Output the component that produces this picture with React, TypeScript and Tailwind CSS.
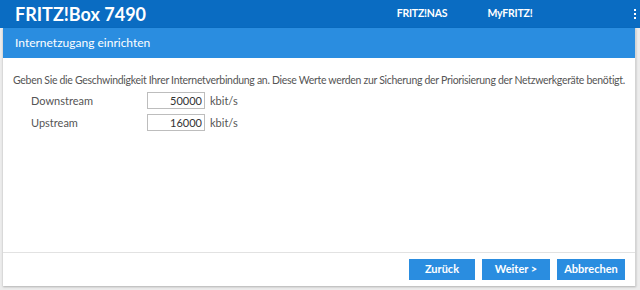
import React from 'react';

export default function App() {
  const [down, setDown] = React.useState('50000');
  const [up, setUp] = React.useState('16000');

  return (
    <main className="w-[640px] h-[290px] bg-[#ececec] flex flex-col overflow-hidden font-['Lato','Open_Sans',sans-serif]">
      {/* Kopfzeile */}
      <header className="h-[28px] shrink-0 bg-[#0a6cc2] flex items-center pl-[15px] pr-[4px]">
        <div className="text-white font-bold text-[18px] leading-none">FRITZ!Box 7490</div>
        <nav className="ml-auto flex items-center text-white text-[10.5px] font-bold tracking-[-0.2px]">
          <span className="mr-[40px]">FRITZ!NAS</span>
          <span className="mr-[101px]">MyFRITZ!</span>
          <span className="flex flex-col gap-[1.5px]">
            <span className="w-[2.5px] h-[2.5px] bg-white" />
            <span className="w-[2.5px] h-[2.5px] bg-white" />
            <span className="w-[2.5px] h-[2.5px] bg-white" />
          </span>
        </nav>
      </header>

      {/* Assistent */}
      <section className="mx-[3px] mr-[4px] h-[258px] bg-white flex flex-col border-r border-[#d4d4d4] shadow-[0_1px_2px_rgba(0,0,0,0.25)]">
        <div className="h-[30px] shrink-0 bg-[#2a8de0] flex items-center pl-[12px] text-white text-[12px]">
          Internetzugang einrichten
        </div>
        <div className="flex-1 pt-[15px] pl-[10px] text-[#555] text-[11px]">
          <p className="mb-[3px] whitespace-nowrap text-[10.5px] tracking-[-0.3px]">
            Geben Sie die Geschwindigkeit Ihrer Internetverbindung an. Diese Werte werden zur Sicherung der Priorisierung der Netzwerkgeräte benötigt.
          </p>
          <div className="grid grid-cols-[116px_auto] gap-y-[5px] items-center pl-[18px] leading-[17px]">
            <label>Downstream</label>
            <div className="flex items-center gap-[5px]">
              <input
                value={down}
                onChange={e => setDown(e.target.value)}
                className="w-[58px] h-[17px] border border-[#bdbdbd] text-right pr-[2px] text-[11px] text-[#333] outline-none"
              />
              <span>kbit/s</span>
            </div>
            <label>Upstream</label>
            <div className="flex items-center gap-[5px]">
              <input
                value={up}
                onChange={e => setUp(e.target.value)}
                className="w-[58px] h-[17px] border border-[#bdbdbd] text-right pr-[2px] text-[11px] text-[#333] outline-none"
              />
              <span>kbit/s</span>
            </div>
          </div>
        </div>
        <div className="h-[34px] shrink-0 border-t border-[#e2e2e2] flex items-center justify-end gap-[7px] pr-[10px]">
          <button className="w-[66px] h-[21px] bg-[#2a8de0] text-white text-[11px] font-bold">Zurück</button>
          <button className="w-[68px] h-[21px] bg-[#2a8de0] text-white text-[11px] font-bold">Weiter &gt;</button>
          <button className="w-[68px] h-[21px] bg-[#2a8de0] text-white text-[11px] font-bold">Abbrechen</button>
        </div>
      </section>
    </main>
  );
}
